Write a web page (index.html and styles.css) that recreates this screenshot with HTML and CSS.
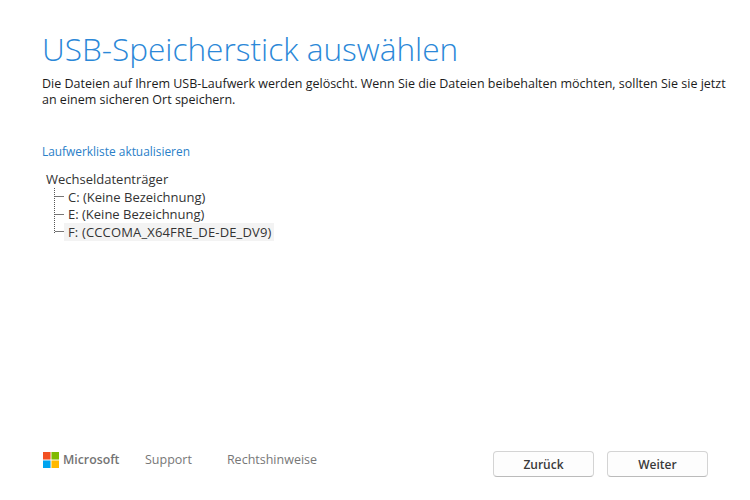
FILE: index.html
```html
<!DOCTYPE html>
<html lang="de">
<head>
	<meta charset="UTF-8">
	<title>USB-Speicherstick auswählen</title>
	<link rel="stylesheet" href="styles.css">
</head>
<body>
<div class="page">
	<div class="main">
		<h1 class="title">USB-Speicherstick auswählen</h1>
		<p class="intro">Die Dateien auf Ihrem USB-Laufwerk werden gelöscht. Wenn Sie die Dateien beibehalten möchten, sollten Sie sie jetzt an einem sicheren Ort speichern.</p>
		<a class="refresh" href="#">Laufwerkliste aktualisieren</a>
		<div class="tree">
			<div class="treeRoot">Wechseldatenträger</div>
			<ul class="drives">
				<li><span>C: (Keine Bezeichnung)</span></li>
				<li><span>E: (Keine Bezeichnung)</span></li>
				<li class="current"><span>F: (CCCOMA_X64FRE_DE-DE_DV9)</span></li>
			</ul>
		</div>
	</div>
	<div class="footer">
		<div class="logo">
			<svg class="logoIcon" width="16" height="16" viewBox="0 0 17 17">
				<rect width="8" height="8" fill="#f25022"/>
				<rect x="9" width="8" height="8" fill="#7fba00"/>
				<rect y="9" width="8" height="8" fill="#00a4ef"/>
				<rect x="9" y="9" width="8" height="8" fill="#ffb900"/>
			</svg>
			<span>Microsoft</span>
		</div>
		<a class="footLink" href="#">Support</a>
		<a class="footLink" href="#">Rechtshinweise</a>
		<div class="buttons">
			<button class="btn">Zurück</button>
			<button class="btn">Weiter</button>
		</div>
	</div>
</div>
</body>
</html>
```
FILE: styles.css
```css
* {
	margin: 0;
	padding: 0;
	box-sizing: border-box;
}

ul {
	list-style: none;
}

body {
	background: #fff;
	font-family: "Open Sans", "Noto Sans", sans-serif;
	color: #222;
}

.page {
	width: 750px;
	height: 500px;
	display: flex;
	flex-direction: column;
	justify-content: space-between;
	padding: 29px 18px 23px 42px;
	overflow: hidden;
}

.title {
	font-size: 31.6px;
	font-weight: 300;
	line-height: 40px;
	color: #2b88d8;
}

.intro {
	margin-top: 7px;
	font-size: 12.5px;
	line-height: 16px;
	font-weight: 500;
	color: #1c1c1c;
}

.refresh {
	display: block;
	margin-top: 35px;
	font-size: 11.9px;
	line-height: 16px;
	color: #2a80c8;
	text-decoration: none;
}

.tree {
	margin-top: 12px;
	padding-left: 4px;
	font-size: 13px;
	color: #333;
}

.treeRoot {
	line-height: 17px;
}

.drives {
	margin-left: 8px;
	border-left: 1px dotted #555;
	height: 45px;
}

.drives li {
	display: flex;
	align-items: center;
	height: 17.5px;
}

.drives li::before {
	content: "";
	width: 9px;
	border-top: 1px solid #777;
}

.drives span {
	padding: 0 2px 0 4px;
	white-space: nowrap;
}

.drives .current span {
	background: #f3f3f3;
	letter-spacing: 0.15px;
}

.footer {
	display: flex;
	align-items: center;
	height: 26px;
	margin-right: 24px;
}

.logo {
	display: flex;
	align-items: center;
	gap: 4px;
	width: 103px;
	margin-bottom: 9px;
	padding-left: 1px;
	font-size: 12.3px;
	font-weight: 600;
	color: #737373;
}

.footLink {
	margin-right: 35px;
	margin-bottom: 9px;
	font-size: 12.5px;
	color: #777;
	text-decoration: none;
}

.buttons {
	margin-left: auto;
	display: flex;
	gap: 13px;
}

.btn {
	width: 101px;
	height: 26px;
	border: 1px solid #d4d4d4;
	border-bottom-color: #bbb;
	border-radius: 4px;
	background: #fdfdfd;
	font-family: inherit;
	font-size: 12px;
	font-weight: 600;
	color: #3a3a3a;
}
```
